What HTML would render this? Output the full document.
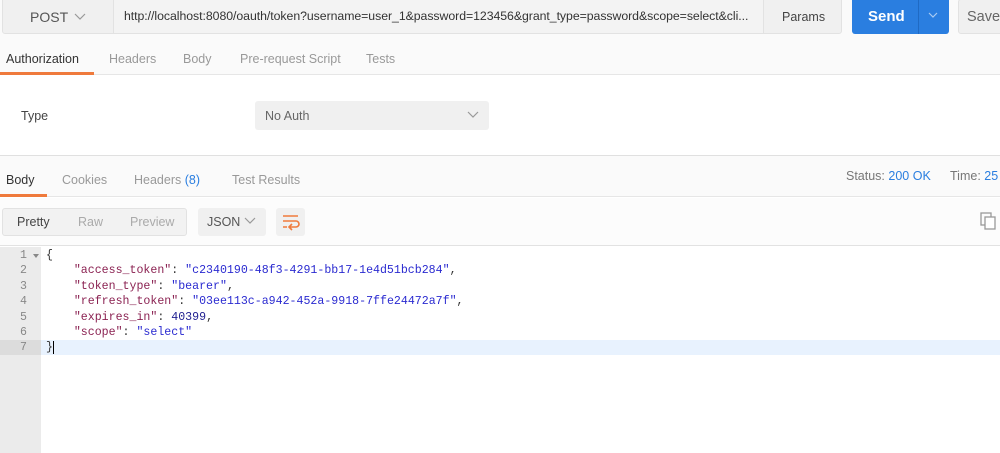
<!DOCTYPE html>
<html><head><meta charset="utf-8"><style>
*{margin:0;padding:0;box-sizing:border-box}
body{width:1000px;height:453px;overflow:hidden;background:#fff;font-family:"Liberation Sans",sans-serif;position:relative;color:#505050}
.a{position:absolute}
.top{left:0;top:0;width:1000px;height:35px;background:#fafafa}
.box{background:#f0f0f0;border:1px solid #e2e2e2;border-radius:3px}
.t{font-size:12.5px;white-space:nowrap}
.code{font-family:"Liberation Mono",monospace;font-size:11.6px;white-space:pre;line-height:15.4px}
.k{color:#8b2252}.s{color:#2a2ad0}.n{color:#1d1d8f}
.ln{width:41px;text-align:right;padding-right:14px;color:#888}
</style></head><body>
<div class="a top"></div>
<div class="a box" style="left:2px;top:-1px;width:112px;height:35px;border-radius:0 0 0 3px"></div>
<div class="a t" style="left:30px;top:9px;font-size:14px;color:#555">POST</div>
<svg class="a" style="left:73px;top:11px" width="14" height="10"><path d="M2 3l5 5 5-5" fill="none" stroke="#999" stroke-width="1.2"/></svg>
<div class="a box" style="left:113px;top:-1px;width:651px;height:35px;border-radius:0;background:#f3f3f3"></div>
<div class="a t" style="left:124px;top:9px;font-size:12.3px;letter-spacing:-0.05px;color:#333">http://localhost:8080/oauth/token?username=user_1&amp;password=123456&amp;grant_type=password&amp;scope=select&amp;cli...</div>
<div class="a box" style="left:763px;top:-1px;width:79px;height:35px;border-radius:0 0 3px 0"></div>
<div class="a t" style="left:782px;top:10px;color:#444">Params</div>
<div class="a" style="left:852px;top:-1px;width:97px;height:35px;background:#2a7ee0;border-radius:0 0 3px 3px"></div>
<div class="a" style="left:918px;top:-1px;width:1px;height:35px;background:#1f6ac4"></div>
<div class="a t" style="left:868px;top:8px;color:#fff;font-size:15px;font-weight:bold">Send</div>
<svg class="a" style="left:926px;top:10px" width="14" height="10"><path d="M3 3l4 4 4-4" fill="none" stroke="#a9cbf2" stroke-width="1.2"/></svg>
<div class="a box" style="left:958px;top:-1px;width:50px;height:35px"></div>
<div class="a t" style="left:967px;top:9px;font-size:14.5px;color:#666">Save</div>
<div class="a" style="left:0;top:35px;width:1000px;height:40px;background:#fafafa;border-bottom:1px solid #e6e6e6"></div>
<div class="a t" style="left:6px;top:52px;color:#333">Authorization</div>
<div class="a t" style="left:109px;top:52px;color:#999">Headers</div>
<div class="a t" style="left:183px;top:52px;color:#999">Body</div>
<div class="a t" style="left:240px;top:52px;color:#999">Pre-request Script</div>
<div class="a t" style="left:366px;top:52px;color:#999">Tests</div>
<div class="a" style="left:0;top:72px;width:94px;height:3px;background:#ef7a3c"></div>
<div class="a t" style="left:21px;top:109px;color:#444">Type</div>
<div class="a" style="left:255px;top:101px;width:234px;height:29px;background:#f0f0f0;border-radius:3px"></div>
<div class="a t" style="left:265px;top:109px;color:#666">No Auth</div>
<svg class="a" style="left:466px;top:110px" width="14" height="10"><path d="M2 2l5 5 5-5" fill="none" stroke="#999" stroke-width="1.2"/></svg>
<div class="a" style="left:0;top:155px;width:1000px;height:42px;background:#fafafa;border-top:1px solid #e0e0e0;border-bottom:1px solid #e6e6e6"></div>
<div class="a t" style="left:6px;top:173px;color:#333">Body</div>
<div class="a t" style="left:62px;top:173px;color:#999">Cookies</div>
<div class="a t" style="left:134px;top:173px;color:#999">Headers <span style="color:#2a7ee0">(8)</span></div>
<div class="a t" style="left:232px;top:173px;color:#999">Test Results</div>
<div class="a" style="left:0;top:194px;width:47px;height:3px;background:#ef7a3c"></div>
<div class="a t" style="left:846px;top:169px;color:#777">Status: <span style="color:#2a7ee0">200 OK</span></div>
<div class="a t" style="left:950px;top:169px;color:#777">Time: <span style="color:#2a7ee0">25</span></div>
<div class="a" style="left:0;top:198px;width:1000px;height:48px;background:#fcfcfc;border-bottom:1px solid #e2e2e2"></div>
<div class="a box" style="left:2px;top:208px;width:185px;height:28px;background:#f2f2f2"></div>
<div class="a t" style="left:17px;top:215px;color:#444">Pretty</div>
<div class="a t" style="left:78px;top:215px;color:#aaa">Raw</div>
<div class="a t" style="left:130px;top:215px;color:#aaa">Preview</div>
<div class="a" style="left:198px;top:208px;width:68px;height:28px;background:#f0f0f0;border-radius:3px"></div>
<div class="a t" style="left:207px;top:215px;color:#555">JSON</div>
<svg class="a" style="left:243px;top:216px" width="14" height="10"><path d="M2 2l5 5 5-5" fill="none" stroke="#999" stroke-width="1.2"/></svg>
<div class="a" style="left:276px;top:208px;width:29px;height:28px;background:#f0f0f0;border-radius:3px"></div>
<svg class="a" style="left:281px;top:213px" width="20" height="18"><path d="M2 3h15M2 8h13a3 3 0 0 1 0 6h-6M11 11l-3 3 3 3M2 14h4" fill="none" stroke="#ef7a3c" stroke-width="1.6"/></svg>
<svg class="a" style="left:980px;top:212px" width="18" height="18"><rect x="1" y="1" width="10" height="12" fill="none" stroke="#999" stroke-width="1.3"/><rect x="5" y="5" width="10" height="12" fill="#fff" stroke="#999" stroke-width="1.3"/></svg>
<div class="a" style="left:0;top:247px;width:41px;height:206px;background:#ebebeb"></div>
<div class="a" style="left:41px;top:340px;width:959px;height:15px;background:#e8f2fe"></div>
<div class="a" style="left:0;top:340px;width:41px;height:15px;background:#dcdcdc"></div>
<div class="a code ln" style="left:0;top:248px">1
2
3
4
5
6
7</div>
<div class="a" style="left:33px;top:254px;width:0;height:0;border-left:3px solid transparent;border-right:3px solid transparent;border-top:4px solid #888"></div>
<div class="a code" style="left:46px;top:248px;color:#333">{
    <span class="k">"access_token"</span>: <span class="s">"c2340190-48f3-4291-bb17-1e4d51bcb284"</span>,
    <span class="k">"token_type"</span>: <span class="s">"bearer"</span>,
    <span class="k">"refresh_token"</span>: <span class="s">"03ee113c-a942-452a-9918-7ffe24472a7f"</span>,
    <span class="k">"expires_in"</span>: <span class="n">40399</span>,
    <span class="k">"scope"</span>: <span class="s">"select"</span>
}</div>
<div class="a" style="left:53px;top:341px;width:1px;height:13px;background:#000"></div>
</body></html>
